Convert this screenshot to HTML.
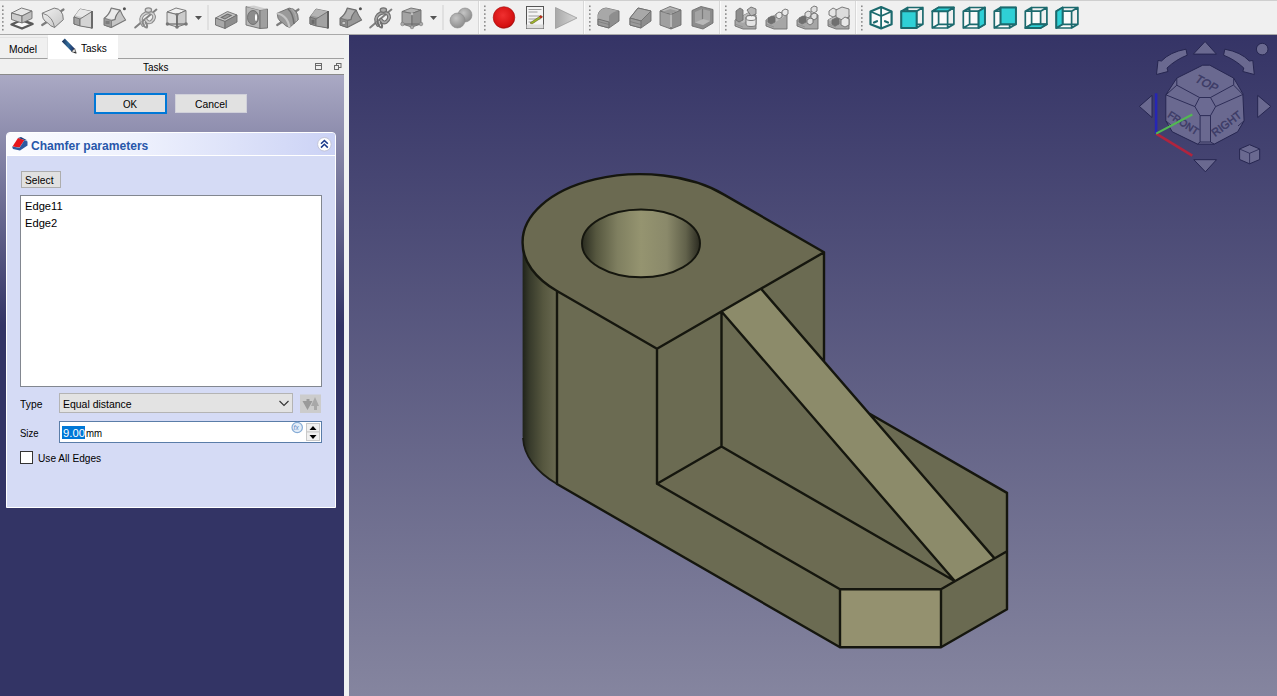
<!DOCTYPE html>
<html><head><meta charset="utf-8">
<style>
*{margin:0;padding:0;box-sizing:border-box}
html,body{width:1277px;height:696px;overflow:hidden;background:#f0f0f0;font-family:"Liberation Sans",sans-serif;font-size:11px;color:#000}
.a{position:absolute}
#tb{left:0;top:0;width:1277px;height:35px;background:#f0f0f0;border-top:1px solid #cfcfcf;border-bottom:1px solid #a9a9a9}
#view{left:349px;top:35px;width:928px;height:661px;background:linear-gradient(#353466,#85859f)}
#tabs{left:0;top:35px;width:349px;height:24px;background:#f0f0f0}
#panel{left:0;top:75px;width:344px;height:621px;background:linear-gradient(#aaa9c4 0px,#333465 250px,#333465 621px)}
#strip{left:344px;top:35px;width:5px;height:661px;background:#f0f2f2}
.txt,.t{white-space:nowrap}
.t{transform-origin:0 0}
</style></head><body>
<div id="tb" class="a"></div>
<!--TB--><svg class="a" style="left:0;top:0" width="1277" height="35" viewBox="0 0 1277 35"><rect x="207.5" y="5" width="1" height="25" fill="#cfcfcf"/><rect x="442.5" y="5" width="1" height="25" fill="#cfcfcf"/><rect x="478" y="1" width="1" height="33" fill="#d8d8d8"/><rect x="479" y="1" width="1" height="33" fill="#fbfbfb"/><rect x="583" y="1" width="1" height="33" fill="#d8d8d8"/><rect x="584" y="1" width="1" height="33" fill="#fbfbfb"/><rect x="719" y="1" width="1" height="33" fill="#d8d8d8"/><rect x="720" y="1" width="1" height="33" fill="#fbfbfb"/><rect x="855" y="1" width="1" height="33" fill="#d8d8d8"/><rect x="856" y="1" width="1" height="33" fill="#fbfbfb"/><rect x="2" y="5.5" width="1.6" height="1.6" fill="#8a8a8a"/><rect x="2" y="9.4" width="1.6" height="1.6" fill="#8a8a8a"/><rect x="2" y="13.3" width="1.6" height="1.6" fill="#8a8a8a"/><rect x="2" y="17.2" width="1.6" height="1.6" fill="#8a8a8a"/><rect x="2" y="21.1" width="1.6" height="1.6" fill="#8a8a8a"/><rect x="2" y="25.0" width="1.6" height="1.6" fill="#8a8a8a"/><rect x="2" y="28.9" width="1.6" height="1.6" fill="#8a8a8a"/><rect x="484" y="5.5" width="1.6" height="1.6" fill="#8a8a8a"/><rect x="484" y="9.4" width="1.6" height="1.6" fill="#8a8a8a"/><rect x="484" y="13.3" width="1.6" height="1.6" fill="#8a8a8a"/><rect x="484" y="17.2" width="1.6" height="1.6" fill="#8a8a8a"/><rect x="484" y="21.1" width="1.6" height="1.6" fill="#8a8a8a"/><rect x="484" y="25.0" width="1.6" height="1.6" fill="#8a8a8a"/><rect x="484" y="28.9" width="1.6" height="1.6" fill="#8a8a8a"/><rect x="589" y="5.5" width="1.6" height="1.6" fill="#8a8a8a"/><rect x="589" y="9.4" width="1.6" height="1.6" fill="#8a8a8a"/><rect x="589" y="13.3" width="1.6" height="1.6" fill="#8a8a8a"/><rect x="589" y="17.2" width="1.6" height="1.6" fill="#8a8a8a"/><rect x="589" y="21.1" width="1.6" height="1.6" fill="#8a8a8a"/><rect x="589" y="25.0" width="1.6" height="1.6" fill="#8a8a8a"/><rect x="589" y="28.9" width="1.6" height="1.6" fill="#8a8a8a"/><rect x="725" y="5.5" width="1.6" height="1.6" fill="#8a8a8a"/><rect x="725" y="9.4" width="1.6" height="1.6" fill="#8a8a8a"/><rect x="725" y="13.3" width="1.6" height="1.6" fill="#8a8a8a"/><rect x="725" y="17.2" width="1.6" height="1.6" fill="#8a8a8a"/><rect x="725" y="21.1" width="1.6" height="1.6" fill="#8a8a8a"/><rect x="725" y="25.0" width="1.6" height="1.6" fill="#8a8a8a"/><rect x="725" y="28.9" width="1.6" height="1.6" fill="#8a8a8a"/><rect x="861" y="5.5" width="1.6" height="1.6" fill="#8a8a8a"/><rect x="861" y="9.4" width="1.6" height="1.6" fill="#8a8a8a"/><rect x="861" y="13.3" width="1.6" height="1.6" fill="#8a8a8a"/><rect x="861" y="17.2" width="1.6" height="1.6" fill="#8a8a8a"/><rect x="861" y="21.1" width="1.6" height="1.6" fill="#8a8a8a"/><rect x="861" y="25.0" width="1.6" height="1.6" fill="#8a8a8a"/><rect x="861" y="28.9" width="1.6" height="1.6" fill="#8a8a8a"/><g transform="translate(10,5)"><polygon points="1.5,19.5 11.5,15 22.5,19 12,23.5" fill="#fafafa" stroke="#5a5a5a" stroke-width="2.4" stroke-linejoin="round"/>
<polygon points="1.5,8 11.5,3 22,6 12,11" fill="#e6e6e6" stroke="#6e6e6e" stroke-width="0.9" stroke-linejoin="round"/><polygon points="1.5,8 12,11 12,18 1.5,14.5" fill="#cdcdcd" stroke="#6e6e6e" stroke-width="0.9" stroke-linejoin="round"/><polygon points="12,11 22,6 22,13.5 12,18" fill="#bfbfbf" stroke="#6e6e6e" stroke-width="0.9" stroke-linejoin="round"/></g><g transform="translate(40,4)"><defs><linearGradient id="grev" x1="0" y1="0" x2="1" y2="1"><stop offset="0" stop-color="#f2f2f2"/><stop offset="1" stop-color="#c4c4c4"/></linearGradient></defs>
<line x1="2.2" y1="21" x2="8" y2="17.3" stroke="#7d7d7d" stroke-width="2.2" stroke-linecap="round"/><line x1="20.5" y1="7.5" x2="23.5" y2="5.5" stroke="#7d7d7d" stroke-width="2.2" stroke-linecap="round"/>
<path d="M2.2,9.2 L14.2,4.1 Q19,4.5 21,7.5 Q23.3,10 23.3,15.7 L14.6,23.5 Q10,22 8.2,19.4 Q4,17 3,14.2 Z" fill="url(#grev)" stroke="#6e6e6e" stroke-width="0.9" stroke-linejoin="round"/><path d="M2.2,9.2 Q8,10.5 11.2,14.9 Q13.5,18 14.6,23.5" fill="none" stroke="#7a7a7a" stroke-width="0.9"/></g><g transform="translate(72,5)"><path d="M2,12 L8,4 L20,6.5 L20,23 L2,19 Z" fill="#c9c9c9" stroke="#6e6e6e" stroke-width="0.9" stroke-linejoin="round"/><polygon points="8,4 20,6.5 12,12.5 3,10.5" fill="#e8e8e8"/><polygon points="2,12 8,14 8,21 2,19" fill="#a2a2a2" stroke="#6e6e6e" stroke-width="0.9" stroke-linejoin="round"/><polygon points="8,14 20,6.5 20,23 8,21" fill="#d4d4d4" stroke="#6e6e6e" stroke-width="0.9" stroke-linejoin="round"/><line x1="20" y1="6" x2="20" y2="23.5" stroke="#6a6a6a" stroke-width="2"/></g><g transform="translate(100,4)"><path d="M11.3,4 L20.2,6.1 Q22,11 25.6,16 L11.3,23.5 L4.2,21.1 L4.2,14.1 Q9,11 11.3,4Z" fill="#c6c6c6" stroke="#777" stroke-width="1.1" stroke-linejoin="round"/>
<path d="M11.8,5.2 L19.6,7 Q16,12 14.8,15.2 L5.5,14.2 Q10,11 11.8,5.2Z" fill="#eaeaea"/><path d="M20.2,6.1 Q15.5,11 15,15.5 L11.5,16.5" fill="none" stroke="#6e6e6e" stroke-width="1.2"/>
<polygon points="4.2,14.1 11.5,16.5 11.5,23.5 4.2,21.1" fill="#9a9a9a" stroke="#777" stroke-width=".8"/><rect x="5.5" y="17" width="4" height="3" fill="#7c7c7c"/><circle cx="24.4" cy="4.7" r="1.5" fill="#505050"/></g><g transform="translate(134,4)"><line x1="1.2" y1="23.5" x2="22.4" y2="5.6" stroke="#808080" stroke-width="2" stroke-linecap="round"/>
<path d="M9,21 Q5,15 9,11 Q14,6.5 19,10 Q22,14 17,18 Q14,19.5 12,16" fill="none" stroke="#8c8c8c" stroke-width="3.6" stroke-linecap="round"/>
<path d="M9,21 Q5,15 9,11 Q14,6.5 19,10 Q22,14 17,18 Q14,19.5 12,16" fill="none" stroke="#d2d2d2" stroke-width="1.6" stroke-linecap="round"/>
<ellipse cx="14.4" cy="6.1" rx="3.2" ry="2.2" fill="#d6d6d6" stroke="#8a8a8a" stroke-width="1.2"/>
<path d="M8,17 Q10,24 13,23.5 Q14,21 11,18" fill="none" stroke="#8a8a8a" stroke-width="1.8"/></g><g transform="translate(165,5)"><polygon points="2,7 11,3 21,5.5 12,9.5" fill="#f0f0f0" stroke="#6e6e6e" stroke-width="0.9" stroke-linejoin="round"/><polygon points="2,7 12,9.5 12,22 2,19" fill="#dedede" stroke="#6e6e6e" stroke-width="0.9" stroke-linejoin="round"/><polygon points="12,9.5 21,5.5 21,19 12,22" fill="#cbcbcb" stroke="#6e6e6e" stroke-width="0.9" stroke-linejoin="round"/><line x1="12" y1="9.5" x2="12" y2="22" stroke="#6a6a6a" stroke-width="1.6"/><line x1="2" y1="19" x2="21" y2="19" stroke="#6a6a6a" stroke-width="1.2"/>
<circle cx="12" cy="9.5" r="1.6" fill="#777"/><circle cx="2.5" cy="19" r="1.8" fill="#777"/><circle cx="12" cy="22" r="1.8" fill="#777"/><circle cx="21" cy="19" r="1.8" fill="#777"/></g><g transform="translate(195,16)"><polygon points="0,0 7,0 3.5,4" fill="#555"/></g><g transform="translate(214,5)"><polygon points="1.5,13 13.5,6.5 23,10 11,16.5" fill="#c4c4c4" stroke="#6e6e6e" stroke-width="0.9" stroke-linejoin="round"/><polygon points="1.5,13 11,16.5 11,23.5 1.5,20" fill="#a8a8a8" stroke="#6e6e6e" stroke-width="0.9" stroke-linejoin="round"/><polygon points="11,16.5 23,10 23,17 11,23.5" fill="#8e8e8e" stroke="#6e6e6e" stroke-width="0.9" stroke-linejoin="round"/><polygon points="6,12.5 13.5,8.5 18.5,10.3 11,14.5" fill="#6e6e6e"/><polygon points="8.5,12.5 13.5,9.8 16,10.6 11,13.5" fill="#9a9a9a"/></g><g transform="translate(245,5)"><polygon points="1,1.5 15,5 15,23.5 1,20" fill="#b8b8b8" stroke="#6e6e6e" stroke-width="0.9" stroke-linejoin="round"/><polygon points="15,5 22.5,4 22.5,23 15,23.5" fill="#a0a0a0" stroke="#6e6e6e" stroke-width="0.9" stroke-linejoin="round"/><polygon points="1,1.5 9,0.5 22.5,4 15,5" fill="#cfcfcf"/><ellipse cx="8" cy="12.5" rx="5.5" ry="7" fill="#8c8c8c" stroke="#666" stroke-width="0.8"/><ellipse cx="11" cy="12.5" rx="1" ry="3.5" fill="#fff"/></g><g transform="translate(275,4)"><line x1="2.2" y1="21" x2="8" y2="17.3" stroke="#7d7d7d" stroke-width="2.2" stroke-linecap="round"/><line x1="20.5" y1="7.5" x2="23.5" y2="5.5" stroke="#7d7d7d" stroke-width="2.2" stroke-linecap="round"/>
<path d="M2.2,9.2 L14.2,4.1 Q19,4.5 21,7.5 Q23.3,10 23.3,15.7 L14.6,23.5 Q10,22 8.2,19.4 Q4,17 3,14.2 Z" fill="#9a9a9a" stroke="#6e6e6e" stroke-width="0.9" stroke-linejoin="round"/><path d="M2.2,9.2 Q8,10.5 11.2,14.9 Q13.5,18 14.6,23.5" fill="none" stroke="#c4c4c4" stroke-width="2.2"/><path d="M13,5 Q18,9 19,20" fill="none" stroke="#6e6e6e" stroke-width="1.6"/><path d="M16,4.5 Q21,8 21.5,17" fill="none" stroke="#b0b0b0" stroke-width="1"/></g><g transform="translate(308,5)"><path d="M2,12 L8,4 L20,6.5 L20,23 L2,19 Z" fill="#9a9a9a" stroke="#6e6e6e" stroke-width="0.9" stroke-linejoin="round"/><polygon points="8,4 20,6.5 12,12.5 3,10.5" fill="#b4b4b4"/><polygon points="2,12 8,14 8,21 2,19" fill="#8a8a8a" stroke="#6e6e6e" stroke-width="0.9" stroke-linejoin="round"/><rect x="3.5" y="14.8" width="3" height="4" fill="#6a6a6a"/><polygon points="8,14 20,6.5 20,23 8,21" fill="#a2a2a2" stroke="#6e6e6e" stroke-width="0.9" stroke-linejoin="round"/><line x1="20" y1="6" x2="20" y2="23.5" stroke="#606060" stroke-width="2"/></g><g transform="translate(336,4)"><path d="M11.3,4 L20.2,6.1 Q22,11 25.6,16 L11.3,23.5 L4.2,21.1 L4.2,14.1 Q9,11 11.3,4Z" fill="#979797" stroke="#6e6e6e" stroke-width="1.1" stroke-linejoin="round"/>
<path d="M11.8,5.2 L19.6,7 Q16,12 14.8,15.2 L5.5,14.2 Q10,11 11.8,5.2Z" fill="#b2b2b2"/><path d="M20.2,6.1 Q15.5,11 15,15.5 L11.5,16.5" fill="none" stroke="#6e6e6e" stroke-width="1.2"/>
<polygon points="4.2,14.1 11.5,16.5 11.5,23.5 4.2,21.1" fill="#8a8a8a" stroke="#6e6e6e" stroke-width=".8"/><ellipse cx="7.8" cy="19" rx="2" ry="1.6" fill="#c8c8c8" stroke="#666" stroke-width=".6"/><circle cx="24.4" cy="4.7" r="1.5" fill="#505050"/></g><g transform="translate(369,4)"><line x1="1.2" y1="23.5" x2="22.4" y2="5.6" stroke="#808080" stroke-width="2" stroke-linecap="round"/>
<path d="M9,21 Q5,15 9,11 Q14,6.5 19,10 Q22,14 17,18 Q14,19.5 12,16" fill="none" stroke="#6e6e6e" stroke-width="3.8" stroke-linecap="round"/>
<path d="M9,21 Q5,15 9,11 Q14,6.5 19,10 Q22,14 17,18 Q14,19.5 12,16" fill="none" stroke="#a8a8a8" stroke-width="1.6" stroke-linecap="round"/>
<ellipse cx="14.4" cy="6.1" rx="3.2" ry="2.2" fill="#aaaaaa" stroke="#707070" stroke-width="1.2"/>
<path d="M8,17 Q10,24 13,23.5 Q14,21 11,18" fill="none" stroke="#707070" stroke-width="1.8"/></g><g transform="translate(400,5)"><polygon points="2,6.5 11,3 21,5 12,8.5" fill="#b2b2b2" stroke="#6e6e6e" stroke-width="0.9" stroke-linejoin="round"/><polygon points="2,6.5 12,8.5 12,22 2,19" fill="#a3a3a3" stroke="#6e6e6e" stroke-width="0.9" stroke-linejoin="round"/><polygon points="12,8.5 21,5 21,19 12,22" fill="#939393" stroke="#6e6e6e" stroke-width="0.9" stroke-linejoin="round"/><line x1="2" y1="19" x2="21" y2="19" stroke="#6a6a6a" stroke-width="1"/>
<circle cx="12" cy="9" r="1.3" fill="#bdbdbd"/><circle cx="2.5" cy="19" r="1.8" fill="#aaa" stroke="#777" stroke-width=".6"/><circle cx="12" cy="22" r="1.8" fill="#aaa" stroke="#777" stroke-width=".6"/><circle cx="21" cy="19" r="1.8" fill="#aaa" stroke="#777" stroke-width=".6"/></g><g transform="translate(430,16)"><polygon points="0,0 7,0 3.5,4" fill="#555"/></g><defs><radialGradient id="gsph" cx="0.4" cy="0.35" r="0.7"><stop offset="0" stop-color="#c4c4c4"/><stop offset="1" stop-color="#8a8a8a"/></radialGradient>
<radialGradient id="gred" cx="0.45" cy="0.4" r="0.65"><stop offset="0" stop-color="#f03030"/><stop offset="0.8" stop-color="#d41010"/><stop offset="1" stop-color="#a00808"/></radialGradient>
<linearGradient id="gplay" x1="0" x2="1"><stop offset="0" stop-color="#a8a8a8"/><stop offset="1" stop-color="#d8d8d8"/></linearGradient></defs><g transform="translate(449,5)"><circle cx="16" cy="10" r="7" fill="url(#gsph)" stroke="#8a8a8a" stroke-width=".6"/><circle cx="8.5" cy="15.5" r="7.5" fill="url(#gsph)" stroke="#8a8a8a" stroke-width=".6"/></g><circle cx="504" cy="17.5" r="10.8" fill="url(#gred)" stroke="#a01010" stroke-width=".6"/><g transform="translate(526,6)"><rect x="0.5" y="0.5" width="17" height="22" fill="#f4f4f4" stroke="#555" stroke-width="1"/><path d="M2.5,3.5h13M2.5,6h9M2.5,10h13M2.5,13h12M2.5,16h6" stroke="#888" stroke-width=".8"/><path d="M4,17 L15,9.5 L16.5,11 L6,18Z" fill="#9bbd2a" stroke="#6a5a20" stroke-width=".6"/><path d="M13,10.5 L15,9.5 L16.5,11 L15,12.5Z" fill="#c02020"/><rect x="0.5" y="18.5" width="17" height="4" fill="#dcdcdc"/></g><g transform="translate(555,7)"><polygon points="0.5,0.5 22,11 0.5,21.5" fill="url(#gplay)" stroke="#9a9a9a" stroke-width=".8"/></g><g transform="translate(597,5)"><path d="M1,10 Q2,4 9,3 L22,6 L22,16 L12,23 L1,20Z" fill="#8e8e8e" stroke="#6e6e6e" stroke-width="0.9" stroke-linejoin="round"/><path d="M1,10 Q2,4 9,3 L22,6 Q16,6 12,11 L12,17 L1,14Z" fill="#a8a8a8"/><polygon points="1,14 12,17 12,23 1,20" fill="#9a9a9a" stroke="#6e6e6e" stroke-width="0.9" stroke-linejoin="round"/><line x1="1" y1="16.5" x2="12" y2="19.5" stroke="#777" stroke-width=".7"/></g><g transform="translate(629,5)"><path d="M1,13 L9,3 L22,6 L22,16 L12,23 L1,20Z" fill="#8e8e8e" stroke="#6e6e6e" stroke-width="0.9" stroke-linejoin="round"/><polygon points="1,13 9,3 22,6 12,16" fill="#a8a8a8" stroke="#6e6e6e" stroke-width="0.9" stroke-linejoin="round"/><polygon points="1,13 12,16 12,23 1,20" fill="#9a9a9a" stroke="#6e6e6e" stroke-width="0.9" stroke-linejoin="round"/><line x1="1" y1="16.5" x2="12" y2="19.5" stroke="#777" stroke-width=".7"/></g><g transform="translate(659,5)"><polygon points="1,6 11,1.5 22,5 12,9.5" fill="#b8b8b8" stroke="#6e6e6e" stroke-width="0.9" stroke-linejoin="round"/><polygon points="1,6 12,9.5 12,24 1,20" fill="#a0a0a0" stroke="#6e6e6e" stroke-width="0.9" stroke-linejoin="round"/><polygon points="12,9.5 22,5 22,20 12,24" fill="#8e8e8e" stroke="#6e6e6e" stroke-width="0.9" stroke-linejoin="round"/><line x1="12" y1="9.5" x2="12" y2="22" stroke="#ddd" stroke-width="1.2"/><polygon points="3,7 11,4 19,6 12,8.5" fill="#9a9a9a"/></g><g transform="translate(691,5)"><polygon points="1,5.5 10,1.5 22,4.5 22,18 12,24 1,21 " fill="#8c8c8c" stroke="#6e6e6e" stroke-width="0.9" stroke-linejoin="round"/><polygon points="4,7 11,4 19,6 19,16 12,20 4,17.5" fill="#a4a4a4"/><line x1="11.5" y1="4" x2="11.5" y2="17" stroke="#7a7a7a" stroke-width="1.2"/><polygon points="4,17.5 12,14 19,16 12,20" fill="#b8b8b8"/></g><g transform="translate(734,5)"><polygon points="1,15 14,8 22,10 22,24 9,24 1,21" fill="#a6a6a6" stroke="#6e6e6e" stroke-width="0.9" stroke-linejoin="round"/><polygon points="1,15 9,18 22,10 14,8" fill="#bcbcbc"/><line x1="1" y1="19" x2="9" y2="22" stroke="#888" stroke-width=".7"/><polygon points="2,6 6,3 9,5 9,15 5,17 2,15" fill="#8e8e8e" stroke="#6e6e6e" stroke-width="0.9" stroke-linejoin="round"/><path d="M12,13 a5,2.5 0 0 1 10,0 v6 a5,2.5 0 0 1 -10,0z" fill="#e4e4e4" stroke="#6e6e6e" stroke-width="0.9" stroke-linejoin="round"/><ellipse cx="17" cy="13" rx="5" ry="2.5" fill="#f0f0f0" stroke="#6e6e6e" stroke-width="0.9" stroke-linejoin="round"/><polygon points="13,5 17,2 22,4 22,9 17,11" fill="#b6b6b6" stroke="#6e6e6e" stroke-width="0.9" stroke-linejoin="round"/></g><g transform="translate(765,5)"><polygon points="1,15 14,8 22,10 22,24 9,24 1,21" fill="#a6a6a6" stroke="#6e6e6e" stroke-width="0.9" stroke-linejoin="round"/><polygon points="1,15 9,18 22,10 14,8" fill="#bcbcbc"/><line x1="1" y1="19" x2="9" y2="22" stroke="#888" stroke-width=".7"/><polygon points="3,13 7,11 10,12 10,17 6,19 3,17" fill="#6f6f6f" stroke="#6e6e6e" stroke-width="0.9" stroke-linejoin="round"/><polygon points="11,9 14,7 17,8 17,12 14,14 11,12" fill="#e8e8e8" stroke="#6e6e6e" stroke-width="0.9" stroke-linejoin="round"/><polygon points="17,6 20,4 23,5 23,9 20,11 17,9" fill="#e8e8e8" stroke="#6e6e6e" stroke-width="0.9" stroke-linejoin="round"/></g><g transform="translate(796,5)"><polygon points="1,15 14,8 22,10 22,24 9,24 1,21" fill="#a6a6a6" stroke="#6e6e6e" stroke-width="0.9" stroke-linejoin="round"/><polygon points="1,15 9,18 22,10 14,8" fill="#bcbcbc"/><line x1="1" y1="19" x2="9" y2="22" stroke="#888" stroke-width=".7"/><polygon points="3,13 7,11 10,12 10,17 6,19 3,17" fill="#6f6f6f" stroke="#6e6e6e" stroke-width="0.9" stroke-linejoin="round"/><polygon points="9,8 12,6 15,7 15,11 12,13 9,11" fill="#e0e0e0" stroke="#6e6e6e" stroke-width="0.9" stroke-linejoin="round"/><polygon points="15,3 18,1 21,2 21,6 18,8 15,6" fill="#e0e0e0" stroke="#6e6e6e" stroke-width="0.9" stroke-linejoin="round"/><polygon points="15,10 18,8 21,9 21,13 18,15 15,13" fill="#e0e0e0" stroke="#6e6e6e" stroke-width="0.9" stroke-linejoin="round"/><polygon points="11,15 14,13 17,14 17,18 14,20 11,18" fill="#e0e0e0" stroke="#6e6e6e" stroke-width="0.9" stroke-linejoin="round"/></g><g transform="translate(827,5)"><polygon points="1,15 14,8 22,10 22,24 9,24 1,21" fill="#a6a6a6" stroke="#6e6e6e" stroke-width="0.9" stroke-linejoin="round"/><polygon points="1,15 9,18 22,10 14,8" fill="#bcbcbc"/><line x1="1" y1="19" x2="9" y2="22" stroke="#888" stroke-width=".7"/><polygon points="2,6 6,3 10,5 10,10 6,12 2,10" fill="#e4e4e4" stroke="#6e6e6e" stroke-width="0.9" stroke-linejoin="round"/><polygon points="9,5 15,2 22,4 22,12 15,15 9,12" fill="#dcdcdc" stroke="#6e6e6e" stroke-width="0.9" stroke-linejoin="round"/><polygon points="5,15 9,13 12,14 12,19 8,21 5,19" fill="#707070" stroke="#6e6e6e" stroke-width="0.9" stroke-linejoin="round"/><polygon points="14,15 18,12 22,14 22,20 18,22 14,20" fill="#e8e8e8" stroke="#6e6e6e" stroke-width="0.9" stroke-linejoin="round"/></g><g><polygon points="870.5,11.5 881.1,7 891.6,11.5 891.6,24.3 881.1,28.4 870.5,24.3" fill="#fafafa" stroke="#1c6a6e" stroke-width="2.2" stroke-linejoin="round"/>
<path d="M870.5,11.5 L881.1,16 L891.6,11.5 M881.1,7 V28.4" fill="none" stroke="#1c6a6e" stroke-width="1.8"/>
<path d="M874,22.5 l3,-1.3 M885,21.2 l3,1.3" stroke="#1c6a6e" stroke-width="2.2" stroke-linecap="round"/></g><polygon points="901.3,11.2 916.6,11.2 916.6,28.0 901.3,28.0" fill="#fafafa"/><path d="M901.3,11.2 L916.6,11.2 M916.6,11.2 L916.6,28.0 M916.6,28.0 L901.3,28.0 M901.3,28.0 L901.3,11.2 M907.6,7.5 L922.9,7.5 M922.9,7.5 L922.9,24.3 M922.9,24.3 L907.6,24.3 M907.6,24.3 L907.6,7.5 M901.3,11.2 L907.6,7.5 M916.6,11.2 L922.9,7.5 M916.6,28.0 L922.9,24.3 M901.3,28.0 L907.6,24.3" fill="none" stroke="#1c6a6e" stroke-width="1.7" stroke-linejoin="round" stroke-linecap="round"/><polygon points="901.3,11.2 916.6,11.2 916.6,28.0 901.3,28.0" fill="#2fd0d6" stroke="#1c6a6e" stroke-width="1.9" stroke-linejoin="round"/><polygon points="932.3,11.2 947.6,11.2 947.6,28.0 932.3,28.0" fill="#fafafa"/><path d="M932.3,11.2 L947.6,11.2 M947.6,11.2 L947.6,28.0 M947.6,28.0 L932.3,28.0 M932.3,28.0 L932.3,11.2 M938.6,7.5 L953.9,7.5 M953.9,7.5 L953.9,24.3 M953.9,24.3 L938.6,24.3 M938.6,24.3 L938.6,7.5 M932.3,11.2 L938.6,7.5 M947.6,11.2 L953.9,7.5 M947.6,28.0 L953.9,24.3 M932.3,28.0 L938.6,24.3" fill="none" stroke="#1c6a6e" stroke-width="1.7" stroke-linejoin="round" stroke-linecap="round"/><polygon points="932.3,11.2 947.6,11.2 953.9,7.5 938.6,7.5" fill="#2fd0d6" stroke="#1c6a6e" stroke-width="1.9" stroke-linejoin="round"/><polygon points="963.3,11.2 978.6,11.2 978.6,28.0 963.3,28.0" fill="#fafafa"/><path d="M963.3,11.2 L978.6,11.2 M978.6,11.2 L978.6,28.0 M978.6,28.0 L963.3,28.0 M963.3,28.0 L963.3,11.2 M969.6,7.5 L984.9,7.5 M984.9,7.5 L984.9,24.3 M984.9,24.3 L969.6,24.3 M969.6,24.3 L969.6,7.5 M963.3,11.2 L969.6,7.5 M978.6,11.2 L984.9,7.5 M978.6,28.0 L984.9,24.3 M963.3,28.0 L969.6,24.3" fill="none" stroke="#1c6a6e" stroke-width="1.7" stroke-linejoin="round" stroke-linecap="round"/><polygon points="978.6,11.2 984.9,7.5 984.9,24.3 978.6,28.0" fill="#2fd0d6" stroke="#1c6a6e" stroke-width="1.9" stroke-linejoin="round"/><polygon points="994.3,11.2 1009.6,11.2 1009.6,28.0 994.3,28.0" fill="#fafafa"/><path d="M994.3,11.2 L1009.6,11.2 M1009.6,11.2 L1009.6,28.0 M1009.6,28.0 L994.3,28.0 M994.3,28.0 L994.3,11.2 M1000.6,7.5 L1015.9,7.5 M1015.9,7.5 L1015.9,24.3 M1015.9,24.3 L1000.6,24.3 M1000.6,24.3 L1000.6,7.5 M994.3,11.2 L1000.6,7.5 M1009.6,11.2 L1015.9,7.5 M1009.6,28.0 L1015.9,24.3 M994.3,28.0 L1000.6,24.3" fill="none" stroke="#1c6a6e" stroke-width="1.7" stroke-linejoin="round" stroke-linecap="round"/><polygon points="1000.6,7.5 1015.9,7.5 1015.9,24.3 1000.6,24.3" fill="#2fd0d6" stroke="#1c6a6e" stroke-width="1.9" stroke-linejoin="round"/><polygon points="1025.3,11.2 1040.6,11.2 1040.6,28.0 1025.3,28.0" fill="#fafafa"/><path d="M1025.3,11.2 L1040.6,11.2 M1040.6,11.2 L1040.6,28.0 M1040.6,28.0 L1025.3,28.0 M1025.3,28.0 L1025.3,11.2 M1031.6,7.5 L1046.9,7.5 M1046.9,7.5 L1046.9,24.3 M1046.9,24.3 L1031.6,24.3 M1031.6,24.3 L1031.6,7.5 M1025.3,11.2 L1031.6,7.5 M1040.6,11.2 L1046.9,7.5 M1040.6,28.0 L1046.9,24.3 M1025.3,28.0 L1031.6,24.3" fill="none" stroke="#1c6a6e" stroke-width="1.7" stroke-linejoin="round" stroke-linecap="round"/><polygon points="1025.3,28.0 1040.6,28.0 1046.9,24.3 1031.6,24.3" fill="#2fd0d6" stroke="#1c6a6e" stroke-width="1.9" stroke-linejoin="round"/><polygon points="1056.3,11.2 1071.6,11.2 1071.6,28.0 1056.3,28.0" fill="#fafafa"/><path d="M1056.3,11.2 L1071.6,11.2 M1071.6,11.2 L1071.6,28.0 M1071.6,28.0 L1056.3,28.0 M1056.3,28.0 L1056.3,11.2 M1062.6,7.5 L1077.9,7.5 M1077.9,7.5 L1077.9,24.3 M1077.9,24.3 L1062.6,24.3 M1062.6,24.3 L1062.6,7.5 M1056.3,11.2 L1062.6,7.5 M1071.6,11.2 L1077.9,7.5 M1071.6,28.0 L1077.9,24.3 M1056.3,28.0 L1062.6,24.3" fill="none" stroke="#1c6a6e" stroke-width="1.7" stroke-linejoin="round" stroke-linecap="round"/><polygon points="1056.3,11.2 1062.6,7.5 1062.6,24.3 1056.3,28.0" fill="#2fd0d6" stroke="#1c6a6e" stroke-width="1.9" stroke-linejoin="round"/></svg><!--/TB-->
<div id="tabs" class="a">
  <div class="a" style="left:0;top:2px;width:48px;height:22px;background:#f0f0f0;border-top:1px solid #e3e3e3;border-right:1px solid #e3e3e3;border-bottom:1px solid #a0a0a0"></div>
    <div class="a" style="left:48px;top:0;width:70px;height:24px;background:#fff"></div>
  <div class="a" style="left:118px;top:23px;width:227px;height:1px;background:#a0a0a0"></div>
</div>
<div class="a" style="left:0;top:74px;width:345px;height:1px;background:#8a8a8a"></div>
<!--EXTRA--><svg class="a" style="left:0;top:35px" width="349" height="40" viewBox="0 35 349 40">
<defs><linearGradient id="gpen" x1="0" y1="0" x2="1" y2="0"><stop offset="0" stop-color="#1c2f55"/><stop offset="0.5" stop-color="#2f6a9a"/><stop offset="1" stop-color="#1b2c60"/></linearGradient></defs>
<polygon points="61.8,41.5 64.8,38.6 74.6,48.6 71.6,51.6" fill="url(#gpen)"/>
<polygon points="71.6,51.6 74.6,48.6 76.2,53.2" fill="#f4f4f4" stroke="#222" stroke-width=".7"/>
<polygon points="74.8,51.6 76.2,53.2 73.8,52.4" fill="#111"/>
<rect x="315.5" y="63.5" width="6" height="6" fill="none" stroke="#6a6a6a" stroke-width="1"/><line x1="315.5" y1="65.5" x2="321.5" y2="65.5" stroke="#6a6a6a" stroke-width="1"/>
<rect x="336.5" y="63.5" width="4.5" height="4" fill="none" stroke="#6a6a6a" stroke-width="1"/><rect x="334.5" y="65.5" width="4" height="4" fill="#f0f0f0" stroke="#6a6a6a" stroke-width="1"/>
</svg><!--/EXTRA-->
<div id="panel" class="a"></div>
<div id="strip" class="a"></div>
<div id="pc">
<div class="a" style="left:94px;top:93px;width:73px;height:21px;background:#e1e1e1;border:2px solid #0078d7"></div>
<div class="a" style="left:175px;top:94px;width:72px;height:19px;background:#e1e1e1;border:1px solid #d0d0da"></div>
<div class="a" style="left:6px;top:132px;width:330px;height:376px;background:#d5dbf5;border:1px solid #fff;border-radius:4px 4px 0 0"></div>
<div class="a" style="left:7px;top:133px;width:328px;height:23px;background:linear-gradient(90deg,#fbfcff 0%,#eef1fd 40%,#cbd2f5 100%);border-radius:3px 3px 0 0;border-bottom:1px solid #fff"></div>
<div class="a" style="left:21px;top:171px;width:40px;height:17px;background:#e1e1e1;border:1px solid #adadad"></div>
<div class="a" style="left:20px;top:195px;width:302px;height:192px;background:#fff;border:1px solid #828790"></div>
<div class="a" style="left:59px;top:393px;width:234px;height:20px;background:#e3e3e3;border:1px solid #b4b4b4"></div>
<div class="a" style="left:59px;top:421px;width:263px;height:22px;background:#fff;border:1px solid #5a7da8"></div>
<div class="a" style="left:62px;top:426px;width:23px;height:13px;background:#0078d7"></div>
<div class="a" style="left:20px;top:451px;width:13px;height:13px;background:#fff;border:1px solid #333"></div>
<div class="a t" style="left:8.6px;top:44.3px;font-size:11.5px;line-height:11.5px;font-weight:normal;color:#000;transform:scaleX(0.891)">Model</div>
<div class="a t" style="left:80.5px;top:43.1px;font-size:11.5px;line-height:11.5px;font-weight:normal;color:#000;transform:scaleX(0.874)">Tasks</div>
<div class="a t" style="left:143.4px;top:62.1px;font-size:11.5px;line-height:11.5px;font-weight:normal;color:#000;transform:scaleX(0.864)">Tasks</div>
<div class="a t" style="left:122.6px;top:98.9px;font-size:11.5px;line-height:11.5px;font-weight:normal;color:#000;transform:scaleX(0.850)">OK</div>
<div class="a t" style="left:194.5px;top:99.1px;font-size:11.5px;line-height:11.5px;font-weight:normal;color:#000;transform:scaleX(0.899)">Cancel</div>
<div class="a t" style="left:30.6px;top:139.5px;font-size:12px;line-height:12px;font-weight:bold;color:#2857aa;transform:scaleX(1.005)">Chamfer parameters</div>
<div class="a t" style="left:25.3px;top:175.1px;font-size:11.5px;line-height:11.5px;font-weight:normal;color:#000;transform:scaleX(0.891)">Select</div>
<div class="a t" style="left:25.3px;top:201.2px;font-size:11.5px;line-height:11.5px;font-weight:normal;color:#000;transform:scaleX(0.969)">Edge11</div>
<div class="a t" style="left:25.3px;top:217.8px;font-size:11.5px;line-height:11.5px;font-weight:normal;color:#000;transform:scaleX(0.969)">Edge2</div>
<div class="a t" style="left:20.0px;top:399.3px;font-size:11.5px;line-height:11.5px;font-weight:normal;color:#000;transform:scaleX(0.897)">Type</div>
<div class="a t" style="left:62.6px;top:399.3px;font-size:11.5px;line-height:11.5px;font-weight:normal;color:#000;transform:scaleX(0.910)">Equal distance</div>
<div class="a t" style="left:20.0px;top:428.3px;font-size:11.5px;line-height:11.5px;font-weight:normal;color:#000;transform:scaleX(0.828)">Size</div>
<div class="a t" style="left:62.5px;top:428.3px;font-size:11.5px;line-height:11.5px;font-weight:normal;color:#fff;transform:scaleX(0.978)">9.00</div>
<div class="a t" style="left:86.4px;top:428.3px;font-size:11.5px;line-height:11.5px;font-weight:normal;color:#000;transform:scaleX(0.840)">mm</div>
<div class="a t" style="left:37.6px;top:453.0px;font-size:11.5px;line-height:11.5px;font-weight:normal;color:#000;transform:scaleX(0.882)">Use All Edges</div>
<svg class="a" style="left:0;top:0" width="345" height="520" viewBox="0 0 345 520">
<path d="M12.5,146.5 L18,138 L24.5,140 L19.5,147.5Z" fill="#e8161c"/>
<path d="M12,146.5 L19.5,147.8 L24.5,140 L27.5,141.5 L27.5,145.5 L20,150.5 L13,149Z" fill="#2d5aa0"/>
<path d="M18,138 L21,137 L27.5,140.5 L24.5,140Z" fill="#1f3f7a"/>
<circle cx="324.4" cy="144.3" r="6.8" fill="#fff" stroke="#c2c4d8" stroke-width="1"/>
<path d="M321,143.8 L324.4,140.5 L327.8,143.8 M321,147.6 L324.4,144.3 L327.8,147.6" fill="none" stroke="#1b3a8c" stroke-width="1.6"/>
<path d="M279.5,401 L284,405.5 L288.5,401" fill="none" stroke="#333" stroke-width="1.1"/>
<rect x="300" y="394.5" width="21" height="18.5" fill="#cccccc"/>
<path d="M303,401 h4 v-2 h3 v2 h3 l-5,9z" fill="#9a9a9a" transform="translate(-0.5,0)"/>
<path d="M311,406 h3 v4 h3 v-4 h2 l-4,-9z" fill="#a8a8a8"/>
<circle cx="297.2" cy="427.5" r="5.2" fill="#e4edf8" stroke="#86acd6" stroke-width="1.2"/>
<text x="293.6" y="430" font-family="Liberation Sans" font-size="6.5" font-style="italic" fill="#5d8ac4">fx</text>
<rect x="306.5" y="423.5" width="13" height="8.5" fill="#f0f0f0" stroke="#c9c9c9" stroke-width="1"/>
<rect x="306.5" y="432" width="13" height="8.5" fill="#f0f0f0" stroke="#c9c9c9" stroke-width="1"/>
<path d="M309.5,430 L313,426 L316.5,430Z M309.5,435 L313,439 L316.5,435Z" fill="#000"/>
</svg>
</div>
<div id="view" class="a"></div>
<svg class="a" style="left:0;top:0" width="1277" height="696" viewBox="0 0 1277 696">
<defs>
<linearGradient id="gcyl" x1="522.6" x2="557" y1="0" y2="0" gradientUnits="userSpaceOnUse">
<stop offset="0" stop-color="#20231a"/><stop offset="0.2" stop-color="#373a2b"/><stop offset="0.6" stop-color="#56573f"/><stop offset="1" stop-color="#6a6a51"/></linearGradient>
<linearGradient id="ghole" x1="582" x2="700" y1="0" y2="0" gradientUnits="userSpaceOnUse">
<stop offset="0" stop-color="#2a2c20"/><stop offset="0.12" stop-color="#56573f"/><stop offset="0.3" stop-color="#7f7f60"/><stop offset="0.5" stop-color="#959470"/><stop offset="0.72" stop-color="#8a896a"/><stop offset="0.88" stop-color="#62624b"/><stop offset="1" stop-color="#2a2a20"/></linearGradient>
</defs>
<g stroke="none">
<path d="M522.6,243.1 L522.6,436.1 A117.4 67.7 0 0 0 557.0,484.0 L557.0,291.0 A117.4 67.7 0 0 1 522.6,243.1 Z" fill="url(#gcyl)"/>
<path d="M557.0,291.0 L657.0,348.7 L824.0,252.3 L724.0,194.6 A117.4 67.7 0 0 0 522.6,243.1 A117.4 67.7 0 0 0 557.0,291.0 Z" fill="#6b6a51"/>
<polygon points="557.0,291.0 657.0,348.7 657.0,483.7 840.0,589.3 840.0,647.3 557.0,484.0" fill="#6b6b52"/>
<polygon points="657.0,348.7 721.5,311.5 721.5,446.5 657.0,483.7" fill="#6b6b52"/>
<polygon points="761.0,288.7 824.0,252.3 824.0,361.5" fill="#6b6b52"/>
<polygon points="721.5,311.5 721.5,446.5 955.0,581.2" fill="#6b6b52"/>
<polygon points="721.5,311.5 761.0,288.7 994.5,558.4 955.0,581.2" fill="#8c8b6a"/>
<polygon points="657.0,483.7 721.5,446.5 955.0,581.2 941.0,589.3 840.0,589.3" fill="#6c6b52"/>
<polygon points="868.8,413.2 1007.0,492.9 1007.0,551.2 994.5,558.4" fill="#6b6b52"/>
<polygon points="840.0,589.3 941.0,589.3 941.0,647.3 840.0,647.3" fill="#94916f"/>
<polygon points="941.0,589.3 1007.0,551.2 1007.0,609.2 941.0,647.3" fill="#6a6a51"/>
</g>
<ellipse cx="641" cy="243.4" rx="59" ry="33.9" fill="url(#ghole)" stroke="#15160e" stroke-width="1.9"/>
<path fill="none" stroke="#15160e" stroke-width="2.4" stroke-linejoin="round" stroke-linecap="round" d="M557.0,291.0 A117.4 67.7 0 0 1 522.6,243.1 A117.4 67.7 0 0 1 724.0,194.6 M557.0,291.0L657.0,348.7 M657.0,348.7L824.0,252.3 M824.0,252.3L724.0,194.6 M557.0,291.0L557.0,484.0 M657.0,348.7L657.0,483.7 M657.0,483.7L840.0,589.3 M557.0,484.0L840.0,647.3 M840.0,589.3L840.0,647.3 M840.0,589.3L941.0,589.3 M840.0,647.3L941.0,647.3 M941.0,589.3L941.0,647.3 M941.0,589.3L1007.0,551.2 M941.0,647.3L1007.0,609.2 M1007.0,551.2L1007.0,609.2 M1007.0,551.2L1007.0,492.9 M657.0,483.7L721.5,446.5 M721.5,311.5L721.5,446.5 M721.5,446.5L955.0,581.2 M721.5,311.5L955.0,581.2 M761.0,288.7L994.5,558.4 M824.0,252.3L824.0,361.5 M868.8,413.2L1007.0,492.9"/>
<path d="M557,484 A117.4 67.7 0 0 1 523,438" fill="none" stroke="#1a1b14" stroke-width="1.7"/>
</svg>

<!--NAV--><svg class="a" style="left:0;top:0" width="1277" height="200" viewBox="0 0 1277 200"><g fill="#6a6990" stroke="#262650" stroke-width="1" stroke-linejoin="round"><polygon points="1205.1,41.5 1193.4,54.1 1216.4,54.1"/><polygon points="1193.8,159.7 1216.5,159.7 1205.4,171.8"/><polygon points="1139.4,106.4 1152,95.4 1152,117.5"/><polygon points="1270.8,106.4 1257.7,95.4 1257.7,117.5"/><circle cx="1262.2" cy="49.1" r="5.8"/><path d="M1186,49.2 Q1170,52 1161.5,61 L1158,60.5 L1156.5,74.5 L1168,71.5 L1167,68 Q1176,59.5 1187.2,55.2 Z"/><path d="M1224.8,49.2 Q1240.8,52 1249.3,61 L1252.8,60.5 L1254.3,74.5 L1242.8,71.5 L1243.8,68 Q1234.8,59.5 1223.6,55.2 Z"/><polygon points="1249.6,144.7 1259.7,149 1259.7,159.5 1249.6,163.8 1239.6,159.5 1239.6,149"/></g><path d="M1239.6,149 L1249.6,153.3 L1259.7,149 M1249.6,153.3 V163.8" fill="none" stroke="#262650" stroke-width="0.8"/><polygon points="1176.8,78.1 1202.7,65.2 1209.8,65.2 1233.7,78.1 1242.8,93.6 1244.1,120.8 1237.6,131.8 1214.3,144.1 1197.5,144.1 1172.3,131.8 1165.8,120.8 1165.8,94.9" fill="#6a6990" stroke="#262650" stroke-width="1"/><polygon points="1199.5,97.5 1210.5,97.5 1215.6,106.6 1210.5,115.6 1200.1,115.6 1194.9,106.6" fill="#6b6a92" stroke="#262650" stroke-width="0.9"/><path d="M1199.5,97.5 L1176.8,85.2 M1210.5,97.5 L1233.1,85.2 M1194.9,106.6 L1166,94.9 M1215.6,106.6 L1242.8,94.5 M1200.1,115.6 V142 M1210.5,115.6 V142 M1176.8,78.1 V85.2 L1166,94.9 M1233.7,78.1 V85.2 L1242.8,94.5 M1200.1,142 L1197.5,144.1 M1210.5,142 L1214.3,144.1 M1200.1,142 H1210.5 M1165.8,120.8 L1172,126 M1244.1,120.8 L1238,126" fill="none" stroke="#262650" stroke-width="0.9"/><text x="0" y="0" transform="translate(1194,81) rotate(28) skewX(-10)" font-family="Liberation Sans" font-size="11.5" fill="#3c3b66" stroke="#3c3b66" stroke-width="0.45">TOP</text><text x="0" y="0" transform="translate(1167,116.5) rotate(33)" font-family="Liberation Sans" font-size="10" fill="#3c3b66" stroke="#3c3b66" stroke-width="0.45">FRONT</text><text x="0" y="0" transform="translate(1215,137) rotate(-36.6)" font-family="Liberation Sans" font-size="11" fill="#3c3b66" stroke="#3c3b66" stroke-width="0.45">RIGHT</text><line x1="1156.1" y1="93.3" x2="1156.1" y2="134" stroke="#2626b4" stroke-width="2.6"/><line x1="1156.1" y1="133.6" x2="1192.3" y2="155.7" stroke="#b0243e" stroke-width="2.6"/><line x1="1156.1" y1="133.6" x2="1192.3" y2="114.5" stroke="#52b852" stroke-width="2.2"/></svg><!--/NAV-->
</body></html>
